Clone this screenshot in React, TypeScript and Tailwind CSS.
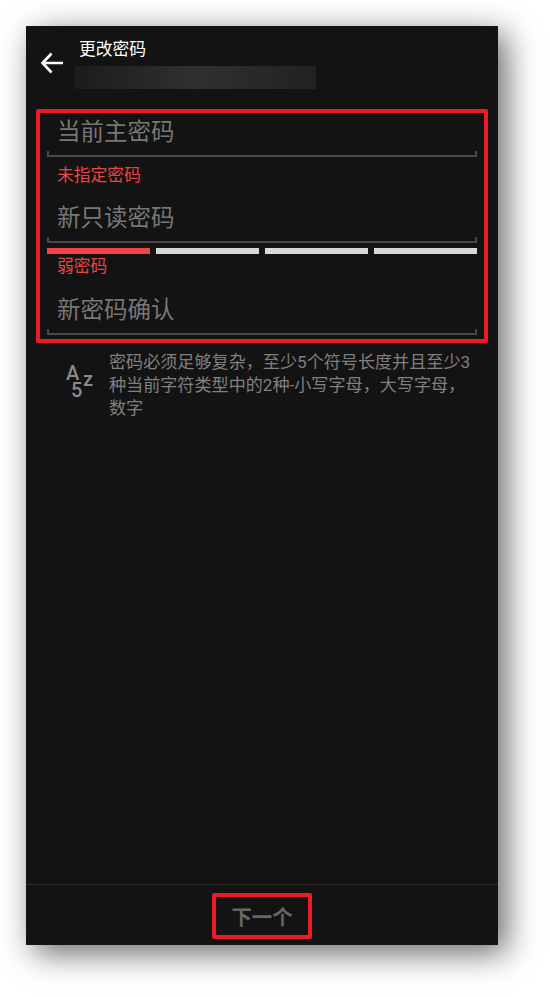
const font = "font-['Roboto','Noto_Sans_CJK_SC',sans-serif]";

function BackArrow() {
  return (
    <svg width="24" height="24" viewBox="0 0 24 24" fill="none" stroke="#fff" strokeWidth="2.6" className="shrink-0">
      <path d="M23 12H3M11.5 2.5 2.5 12l9 9.5" />
    </svg>
  );
}

// "Az5" badge next to the password rule
function AzIcon() {
  return (
    <svg width="30" height="52" viewBox="0 0 30 52" fill="#8a8a8a" fontFamily="Roboto, sans-serif" fontWeight="500" fontSize="20" className="shrink-0">
      <text x="2" y="29">A</text>
      <text x="19" y="35">z</text>
      <text x="7" y="46">5</text>
    </svg>
  );
}

function Field({ label }: { label: string }) {
  return (
    <div className="mx-[7px] h-[47px]">
      <div className="h-[41px] pt-[5px] pl-[10px] flex items-center text-[23.5px] leading-none text-[#777777]">{label}</div>
      <div className="h-[6px] border-x-2 border-b-2 border-[#484848]" />
    </div>
  );
}

function StrengthBars() {
  return (
    <div className="mx-[7px] mt-[5px] grid grid-cols-4 gap-[5.5px]">
      <div className="h-[5.5px] bg-[#ef4444]" />
      <div className="h-[5.5px] bg-[#d8d8d8]" />
      <div className="h-[5.5px] bg-[#d8d8d8]" />
      <div className="h-[5.5px] bg-[#d8d8d8]" />
    </div>
  );
}

export default function App() {
  return (
    <div className={`${font} w-[550px] h-[997px] bg-white pt-[26px] pl-[26px] overflow-hidden`}>
      <div className="w-[472px] h-[919px] bg-[#131313] flex flex-col shadow-[8px_8px_30px_rgba(0,0,0,0.6)]">
        {/* Header */}
        <div className="h-[83px] shrink-0 flex pl-[14px] pt-[25px]">
          <BackArrow />
          <div className="ml-[12px] -mt-[14px]">
            <div className="pl-[3px] text-[16.8px] leading-[24px] text-white">更改密码</div>
            <div className="-ml-[1px] mt-[5px] w-[241px] h-[23px] bg-gradient-to-r from-[#1c1c1c] via-[#303030] to-[#222222]" />
          </div>
        </div>

        {/* Form, marked in red */}
        <div className="ml-[10px] w-[452px] h-[234px] border-4 border-[#ed1c24] rounded-[2px]">
          <div className="-mt-[3px]">
            <Field label="当前主密码" />
          </div>
          <div className="h-[39px] pl-[17px] pt-[6px] text-[16.8px] leading-[24px] text-[#e84545]">未指定密码</div>
          <Field label="新只读密码" />
          <StrengthBars />
          <div className="h-[34.5px] pl-[17px] text-[16.8px] leading-[24px] text-[#e84545]">弱密码</div>
          <Field label="新密码确认" />
        </div>

        {/* Password rule */}
        <div className="mt-[8px] flex pl-[38px] pr-[24px]">
          <div className="w-[46px] shrink-0">
            <AzIcon />
          </div>
          <p className="-ml-px text-[17.1px] leading-[23px] text-[#808080]">
            密码必须足够复杂，至少5个符号长度并且至少3种当前字符类型中的2种-小写字母，大写字母，数字
          </p>
        </div>

        {/* Footer */}
        <div className="mt-auto h-[61px] border-t border-[#2e2e2e] flex justify-center pt-[8px]">
          <div className="w-[100px] h-[46px] pt-[4px] border-4 border-[#ed1c24] rounded-[2px] flex items-center justify-center text-[20.4px] font-bold text-[#666666]">
            下一个
          </div>
        </div>
      </div>
    </div>
  );
}
